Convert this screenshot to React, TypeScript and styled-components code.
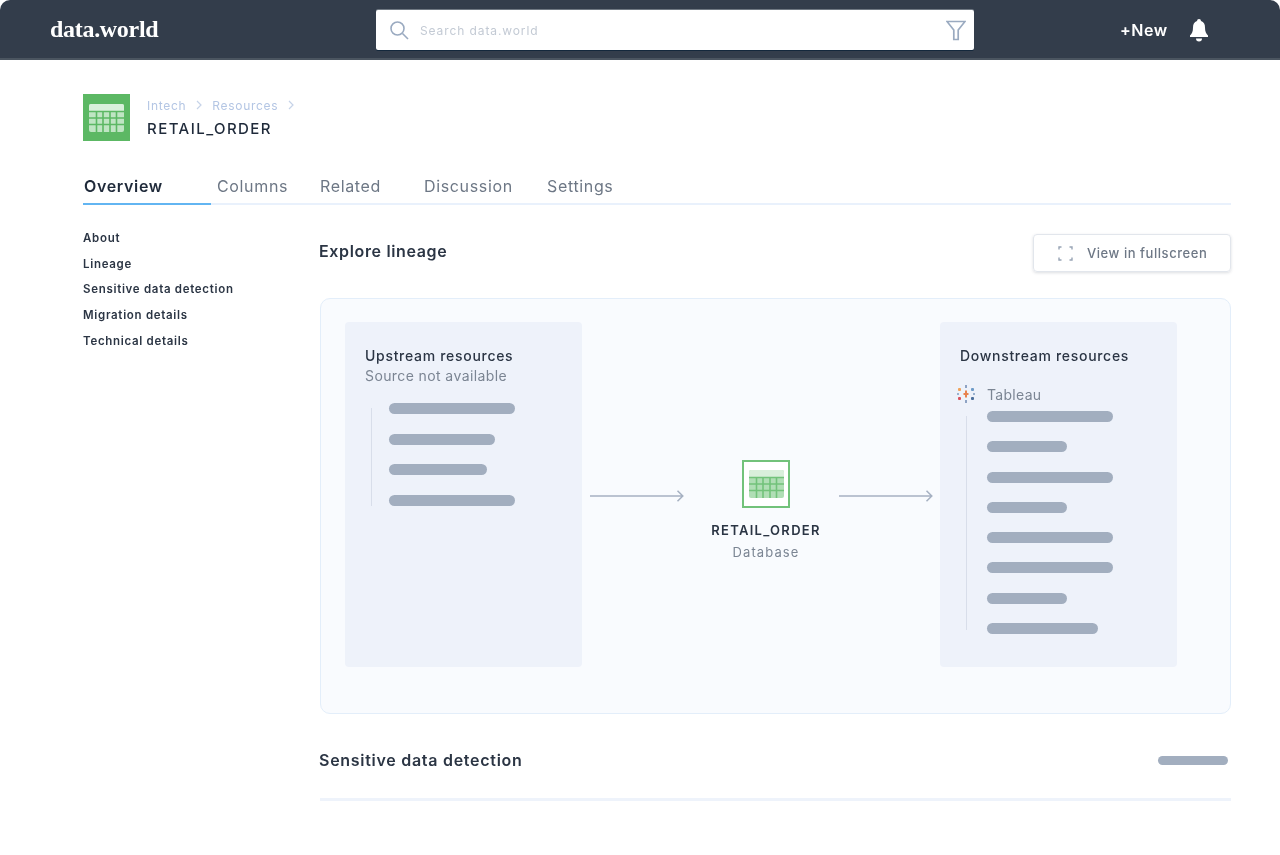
import React from 'react';
import styled, { createGlobalStyle } from 'styled-components';

const GlobalStyle = createGlobalStyle`
  html, body {
    margin: 0;
    background: #fff;
    font-family: Inter, "Liberation Sans", sans-serif;
    color: #1f2a3a;
  }
`

const Page = styled.div`
  width: 1280px;
  height: 855px;
  overflow: hidden;
  background: #fff;
  filter: blur(0.6px);
`

const Header = styled.header`
  box-sizing: border-box;
  border-bottom: 2px solid #4b5560;
  height: 60px;
  padding: 10px 0 8px 50px;
  background: #333d4b;
  border-radius: 10px 10px 0 0;
  display: flex;
  align-items: flex-start;
`

const Logo = styled.div`
  width: 326px;
  height: 40px;
  line-height: 39px;
  font-family: "Liberation Serif", serif;
  font-size: 24px;
  font-weight: 700;
  letter-spacing: -0.3px;
  color: #fff;
`

const SearchBox = styled.div`
  width: 598px;
  height: 40px;
  box-sizing: border-box;
  padding: 0 8px 0 13px;
  background: #fff;
  border-radius: 2px;
  box-shadow: 0 1px 0 #14283c, 0 -1px 0 #6f7882;
  display: flex;
  align-items: center;
`

const SearchText = styled.span`
  flex: 1;
  margin-left: 11px;
  font-size: 12px;
  letter-spacing: 0.9px;
  color: #c3cad4;
`

const HeaderAction = styled.div`
  margin-left: 146px;
  height: 40px;
  display: flex;
  align-items: center;
  gap: 20px;
  font-size: 16px;
  font-weight: 600;
  letter-spacing: 0.5px;
  color: #fff;
`

const Content = styled.div`
  width: 1148px;
  margin-left: 83px;
`

const TitleRow = styled.div`
  padding-top: 34px;
  display: flex;
  gap: 17px;
`

const BigIcon = styled.div`
  width: 47px;
  height: 47px;
  background: #5cb864;
  display: flex;
  align-items: center;
  justify-content: center;
`

const Crumbs = styled.div`
  height: 22px;
  display: flex;
  align-items: center;
  gap: 10px;
  font-size: 12px;
  letter-spacing: 0.7px;
  color: #b4c6e4;
`

const Title = styled.div`
  margin-top: 3px;
  font-size: 15px;
  font-weight: 500;
  letter-spacing: 1.45px;
  color: #1f2a3a;
`

const Tabs = styled.nav`
  margin-top: 27px;
  height: 37px;
  box-sizing: border-box;
  border-bottom: 2px solid #e9f1fc;
  display: flex;
`

const Tab = styled.div<{ $width: number; $active?: boolean }>`
  width: ${props => props.$width}px;
  height: 37px;
  box-sizing: border-box;
  padding-left: 1px;
  line-height: 36px;
  font-size: 16px;
  font-weight: ${props => props.$active ? 600 : 400};
  letter-spacing: 0.65px;
  color: ${props => props.$active ? '#1f2a3a' : '#6d7785'};
  background: ${props => props.$active
    ? 'linear-gradient(#62b5f2, #62b5f2) left bottom / 128px 2px no-repeat'
    : 'none'};
`

const Body = styled.div`
  display: flex;
`

const Sidebar = styled.aside`
  width: 237px;
  padding-top: 26px;
  display: flex;
  flex-direction: column;
  gap: 10.7px;
`

const SideLink = styled.div`
  height: 15px;
  line-height: 14px;
  font-size: 11.5px;
  font-weight: 600;
  letter-spacing: 0.7px;
  color: #2b3544;
`

const Main = styled.main`
  width: 911px;
`

const SectionHead = styled.div`
  height: 93px;
  padding-top: 29px;
  box-sizing: border-box;
  display: flex;
  justify-content: space-between;
  align-items: flex-start;
`

const SectionTitle = styled.div`
  margin-top: 7px;
  margin-left: -1px;
  font-size: 16px;
  font-weight: 600;
  letter-spacing: 0.65px;
  color: #2b3544;
`

const FullscreenButton = styled.div`
  width: 198px;
  height: 38px;
  box-sizing: border-box;
  padding-left: 24px;
  border: 1px solid #e2e6ec;
  border-radius: 4px;
  box-shadow: 0 1px 3px rgba(60, 70, 90, 0.18);
  display: flex;
  align-items: center;
  gap: 14px;
  font-size: 13px;
  font-weight: 500;
  letter-spacing: 0.55px;
  color: #6d7785;
`

const LineagePanel = styled.section`
  height: 416px;
  box-sizing: border-box;
  padding: 23px 53px 0 24px;
  background: #f9fbfe;
  border: 1px solid #e3eefa;
  border-radius: 10px;
  display: flex;
  align-items: flex-start;
`

const ResourceCard = styled.div`
  width: 237px;
  height: 345px;
  box-sizing: border-box;
  padding: 24px 0 0 20px;
  background: #eef2fa;
  border-radius: 4px;
`

const CardTitle = styled.div`
  font-size: 14px;
  font-weight: 500;
  line-height: 20px;
  letter-spacing: 0.7px;
  color: #2b3544;
`

const CardNote = styled.div`
  font-size: 14px;
  line-height: 20px;
  letter-spacing: 0.4px;
  color: #7b8593;
`

const ToolRow = styled.div`
  margin: 18px 0 0 -4px;
  height: 20px;
  display: flex;
  align-items: center;
  gap: 11px;
  font-size: 14px;
  letter-spacing: 0.3px;
  color: #7b8593;
`

const Tree = styled.div<{ $top: number; $pad: number; $gap: number; $tail: number }>`
  margin-top: ${props => props.$top}px;
  margin-left: 6px;
  padding-left: ${props => props.$pad}px;
  background: linear-gradient(#d8deea, #d8deea) 0 5px / 1px calc(100% - ${props => props.$tail}px) no-repeat;
  display: flex;
  flex-direction: column;
  gap: ${props => props.$gap}px;
`

const SkeletonBar = styled.div<{ $width: number }>`
  width: ${props => props.$width}px;
  height: 11px;
  border-radius: 6px;
  background: #a2aebf;
`

const FlowMiddle = styled.div`
  width: 358px;
  padding: 138px 0 0 8px;
  box-sizing: border-box;
  display: flex;
  align-items: flex-start;
`

const ArrowSlot = styled.div`
  margin-top: 30px;
  height: 12px;
  display: flex;
`

const Node = styled.div`
  width: 155px;
  box-sizing: border-box;
  padding-left: 9px;
  display: flex;
  flex-direction: column;
  align-items: center;
`

const NodeIcon = styled.div`
  width: 48px;
  height: 48px;
  box-sizing: border-box;
  border: 2px solid #72c27a;
  background: #fff;
  display: flex;
  align-items: center;
  justify-content: center;
`

const NodeName = styled.div`
  margin-top: 13px;
  font-size: 13px;
  font-weight: 600;
  line-height: 18px;
  letter-spacing: 1.3px;
  color: #2b3544;
`

const NodeType = styled.div`
  margin-top: 4px;
  font-size: 13px;
  line-height: 18px;
  letter-spacing: 1.1px;
  color: #7b8593;
`

const SensitiveRow = styled.div`
  height: 87px;
  box-sizing: border-box;
  padding: 37px 3px 0 0;
  border-bottom: 3px solid #eef3fb;
  display: flex;
  justify-content: space-between;
  align-items: flex-start;
`

const SensitiveTitle = styled.div`
  margin-left: -1px;
  margin-top: -1px;
  font-size: 16px;
  font-weight: 600;
  line-height: 20px;
  letter-spacing: 0.72px;
  color: #2b3544;
`

const SummaryBar = styled(SkeletonBar)`
  height: 9px;
  margin-top: 5px;
`

const GridIcon = ({ band, cells, lines }: { band: string; cells: string; lines: string }) => (
  <svg width="35" height="28" viewBox="0 0 35 28">
    <rect x="0" y="0" width="35" height="28" rx="2" fill={cells} />
    <path d="M2 0h31a2 2 0 0 1 2 2v5.500H0V2a2 2 0 0 1 2-2z" fill={band} />
    <g stroke={lines} strokeWidth="1.6">
      <path d="M0 7.500h35M0 14h35M0 20.500h35M7.500 7.500V28M14 7.500V28M21 7.500V28M27.500 7.500V28" />
    </g>
  </svg>
)

const Arrow = () => (
  <svg width="94" height="12" viewBox="0 0 94 12" fill="none" stroke="#a6b1c2" strokeWidth="1.5">
    <path d="M0 6h92.500M87.500 .7 92.800 6l-5.300 5.300" />
  </svg>
)

const TableauMark = () => (
  <svg width="20" height="20" viewBox="0 0 20 20" fill="none" strokeWidth="2">
    <path d="M10 1v3M10 16v3" stroke="#8ea3c4" />
    <path d="M3.500 4v3M2 5.500h3" stroke="#f0a35a" />
    <path d="M3.500 13v3M2 14.500h3" stroke="#d9525f" />
    <path d="M16.500 4v3M15 5.500h3" stroke="#6d9bc8" />
    <path d="M16.500 13v3M15 14.500h3" stroke="#4c6f9c" />
    <path d="M1 10h2M17 10h2" stroke="#9bb2d0" />
    <path d="M10 6.500v7M7.500 10h5" stroke="#e8824e" />
  </svg>
)

const upstream = [126, 106, 98, 126];
const downstream = [126, 80, 126, 80, 126, 126, 80, 111];
const sideLinks = ['About', 'Lineage', 'Sensitive data detection', 'Migration details', 'Technical details'];

const App = () => (
  <Page>
    <GlobalStyle />
    <Header>
      <Logo>data.world</Logo>
      <SearchBox>
        <svg width="20" height="20" viewBox="0 0 20 20" fill="none" stroke="#9aaac0" strokeWidth="1.6">
          <circle cx="8.500" cy="8.500" r="6.500" />
          <path d="M13.500 13.500 19 19" />
        </svg>
        <SearchText>Search data.world</SearchText>
        <svg width="20" height="21" viewBox="0 0 20 21" fill="none" stroke="#9aaac0" strokeWidth="1.7">
          <path d="M1 1.500h18l-6.800 8.500v9.500h-4.400V10z" />
        </svg>
      </SearchBox>
      <HeaderAction>
        <span>+New</span>
        <svg width="22" height="24" viewBox="0 0 22 24" fill="#fff">
          <path d="M11 1a2 2 0 0 1 2 2c3 1 4 3.500 4 6.500 0 4 1 6 3 8v1.500H2v-1.500c2-2 3-4 3-8C5 6.500 6 4 9 3a2 2 0 0 1 2-2z" />
          <path d="M8 20.500h6a3 3 0 0 1-6 0z" />
        </svg>
      </HeaderAction>
    </Header>
    <Content>
      <TitleRow>
        <BigIcon>
          <GridIcon band="#d9f0db" cells="#bfe5c3" lines="#5cb864" />
        </BigIcon>
        <div>
          <Crumbs>
            <span>Intech</span>
            <svg width="6" height="10" viewBox="0 0 6 10" fill="none" stroke="#c6d3e8" strokeWidth="1.2"><path d="M1 1l4 4-4 4" /></svg>
            <span>Resources</span>
            <svg width="6" height="10" viewBox="0 0 6 10" fill="none" stroke="#c6d3e8" strokeWidth="1.2"><path d="M1 1l4 4-4 4" /></svg>
          </Crumbs>
          <Title>RETAIL_ORDER</Title>
        </div>
      </TitleRow>
      <Tabs>
        <Tab $width={133} $active>Overview</Tab>
        <Tab $width={103}>Columns</Tab>
        <Tab $width={104}>Related</Tab>
        <Tab $width={123}>Discussion</Tab>
        <Tab $width={100}>Settings</Tab>
      </Tabs>
      <Body>
        <Sidebar>
          {sideLinks.map(link => <SideLink key={link}>{link}</SideLink>)}
        </Sidebar>
        <Main>
          <SectionHead>
            <SectionTitle>Explore lineage</SectionTitle>
            <FullscreenButton>
              <svg width="15" height="15" viewBox="0 0 15 15" fill="none" stroke="#98a4b5" strokeWidth="1.4">
                <path d="M1 3.500V1h2.500M11.500 1H14v2.500M14 11.500V14h-2.500M3.500 14H1v-2.500" />
              </svg>
              View in fullscreen
            </FullscreenButton>
          </SectionHead>
          <LineagePanel>
            <ResourceCard>
              <CardTitle>Upstream resources</CardTitle>
              <CardNote>Source not available</CardNote>
              <Tree $top={17} $pad={18} $gap={19.67} $tail={5}>
                {upstream.map((width, i) => <SkeletonBar key={i} $width={width} />)}
              </Tree>
            </ResourceCard>
            <FlowMiddle>
              <ArrowSlot><Arrow /></ArrowSlot>
              <Node>
                <NodeIcon>
                  <GridIcon band="#d9efdb" cells="#b0deb5" lines="#72c27a" />
                </NodeIcon>
                <NodeName>RETAIL_ORDER</NodeName>
                <NodeType>Database</NodeType>
              </Node>
              <ArrowSlot><Arrow /></ArrowSlot>
            </FlowMiddle>
            <ResourceCard>
              <CardTitle>Downstream resources</CardTitle>
              <ToolRow>
                <TableauMark />
                Tableau
              </ToolRow>
              <Tree $top={7} $pad={21} $gap={19.3} $tail={9}>
                {downstream.map((width, i) => <SkeletonBar key={i} $width={width} />)}
              </Tree>
            </ResourceCard>
          </LineagePanel>
          <SensitiveRow>
            <SensitiveTitle>Sensitive data detection</SensitiveTitle>
            <SummaryBar $width={70} />
          </SensitiveRow>
        </Main>
      </Body>
    </Content>
  </Page>
);

export default App;
